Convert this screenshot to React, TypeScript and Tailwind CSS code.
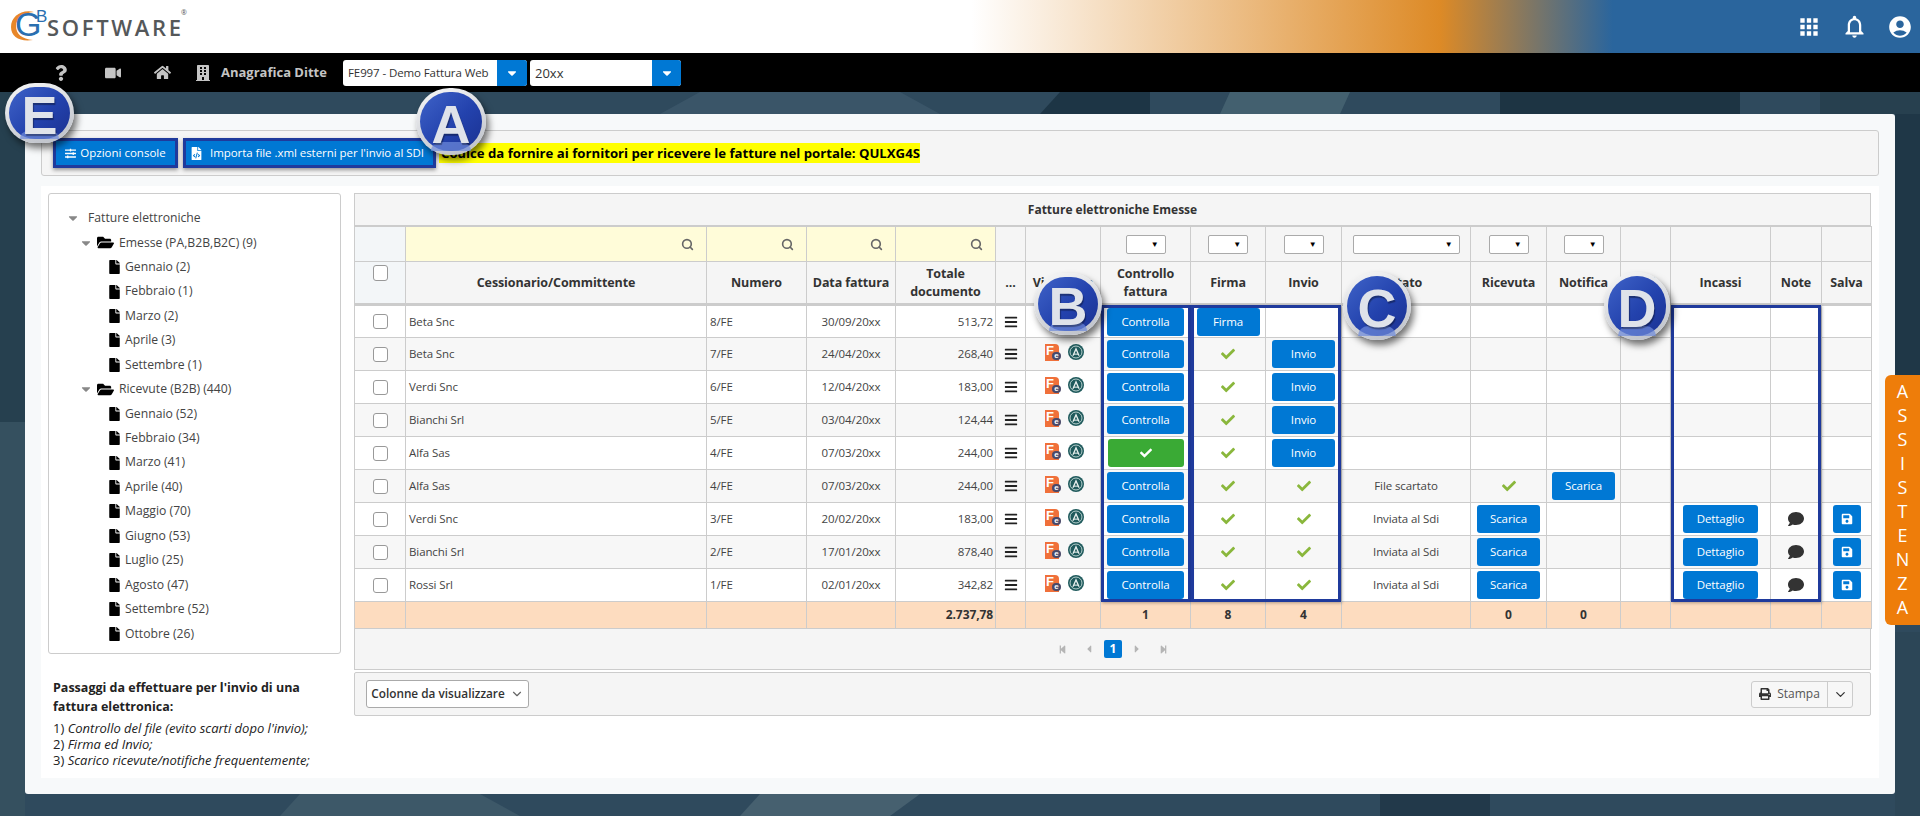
import { Search, ChevronDown } from "lucide-react";
import {
  FaBars,
  FaBuilding,
  FaCaretDown,
  FaCaretLeft,
  FaCaretRight,
  FaCheck,
  FaComment,
  FaFile,
  FaFileCode,
  FaFolderOpen,
  FaHome,
  FaPrint,
  FaQuestion,
  FaSave,
  FaSlidersH,
  FaStepBackward,
  FaStepForward,
  FaVideo,
} from "react-icons/fa";
import { MdAccountCircle, MdApps, MdNotificationsNone } from "react-icons/md";

type Row = {
  name: string;
  num: string;
  date: string;
  total: string;
  icons?: boolean;
  ok?: boolean;
  firma?: boolean;
  invio?: "btn" | "ok";
  stato?: string;
  ricevuta?: "btn" | "ok";
  notifica?: boolean;
  incassi?: boolean;
};

const rows: Row[] = [
  { name: "Beta Snc", num: "8/FE", date: "30/09/20xx", total: "513,72", firma: true },
  { name: "Beta Snc", num: "7/FE", date: "24/04/20xx", total: "268,40", icons: true, invio: "btn" },
  { name: "Verdi Snc", num: "6/FE", date: "12/04/20xx", total: "183,00", icons: true, invio: "btn" },
  { name: "Bianchi Srl", num: "5/FE", date: "03/04/20xx", total: "124,44", icons: true, invio: "btn" },
  { name: "Alfa Sas", num: "4/FE", date: "07/03/20xx", total: "244,00", icons: true, ok: true, invio: "btn" },
  { name: "Alfa Sas", num: "4/FE", date: "07/03/20xx", total: "244,00", icons: true, invio: "ok", stato: "File scartato", ricevuta: "ok", notifica: true },
  { name: "Verdi Snc", num: "3/FE", date: "20/02/20xx", total: "183,00", icons: true, invio: "ok", stato: "Inviata al Sdi", ricevuta: "btn", incassi: true },
  { name: "Bianchi Srl", num: "2/FE", date: "17/01/20xx", total: "878,40", icons: true, invio: "ok", stato: "Inviata al Sdi", ricevuta: "btn", incassi: true },
  { name: "Rossi Srl", num: "1/FE", date: "02/01/20xx", total: "342,82", icons: true, invio: "ok", stato: "Inviata al Sdi", ricevuta: "btn", incassi: true },
];

const colWidths = [51, 301, 100, 89, 100, 30, 75, 90, 75, 76, 129, 76, 74, 50, 100, 51, 50];

const emesse = ["Gennaio (2)", "Febbraio (1)", "Marzo (2)", "Aprile (3)", "Settembre (1)"];
const ricevute = [
  "Gennaio (52)",
  "Febbraio (34)",
  "Marzo (41)",
  "Aprile (40)",
  "Maggio (70)",
  "Giugno (53)",
  "Luglio (25)",
  "Agosto (47)",
  "Settembre (52)",
  "Ottobre (26)",
];

function Logo() {
  return (
    <div className="relative ml-[9px] h-[53px] w-[190px]">
      <svg className="absolute left-0 top-[8px] h-[36px] w-[34px]" viewBox="0 0 34 36">
        <path d="M25 4C12 1 2 9 2 19c0 10 9 15 22 13C13 31 7 26 7 18 7 11 14 5 25 4Z" fill="#e8872a" />
      </svg>
      <span className="absolute left-[6px] top-[5px] font-['Liberation_Sans',sans-serif] text-[34px] leading-[38px] text-[#2a6fb0]">G</span>
      <span className="absolute left-[27px] top-[8px] font-['Liberation_Sans',sans-serif] text-[17px] leading-[18px] text-[#2a6fb0]">B</span>
      <span className="absolute left-[38px] top-[12px] whitespace-nowrap font-['Open_Sans',sans-serif] text-[22px] font-semibold leading-[30px] tracking-[2.7px] text-[#55585a]">SOFTWARE</span>
      <span className="absolute left-[172px] top-[8px] text-[7px] leading-[10px] text-[#555]">®</span>
    </div>
  );
}

function Badge({ letter, className }: { letter: string; className: string }) {
  return (
    <div className={`absolute z-30 rounded-full bg-[linear-gradient(160deg,#f8f8f8,#b9bdc6)] p-[4px] shadow-[3px_5px_7px_rgba(0,0,0,0.55)] ${className}`}>
      <div className="relative flex h-full w-full items-center justify-center rounded-full bg-[linear-gradient(135deg,#3f63c8_0%,#2342ad_55%,#1b3191_100%)] pt-[4px]">
        <div className="absolute bottom-0 left-[18%] h-[16%] w-[64%] rounded-t-full bg-[#6f8cdc]/70" />
        <span className="relative font-['Liberation_Sans',sans-serif] text-[54px] font-bold leading-[48px] text-[#dfe3ea] [text-shadow:1px_2px_1px_rgba(0,0,0,0.35)]">
          {letter}
        </span>
      </div>
    </div>
  );
}

function ActionButton({
  children,
  className = "",
  color = "bg-[#0078d4]",
}: {
  children: React.ReactNode;
  className?: string;
  color?: string;
}) {
  return (
    <div className={`flex h-[28px] items-center justify-center rounded-[3px] text-[11.5px] text-white ${color} ${className}`}>
      {children}
    </div>
  );
}

function Check() {
  return <FaCheck className="mx-auto text-[14px] text-[#8ab73c]" />;
}

function FilterSelect({ className = "w-[40px]" }: { className?: string }) {
  return (
    <div className={`mx-auto flex h-[19px] items-center justify-end rounded-[2px] border border-[#aaa] bg-white pr-[6px] text-[8px] text-black ${className}`}>
      ▼
    </div>
  );
}

function RowIcons() {
  return (
    <div className="flex items-center justify-center gap-[9px] pb-[4px] pl-[3px]">
      <div className="relative h-[17px] w-[14px] rounded-tr-[4px] bg-[#f0703a]">
        <span className="absolute left-[1px] top-[-1px] font-['Liberation_Sans',sans-serif] text-[13px] font-bold leading-[16px] text-white">F</span>
        <span className="absolute bottom-[1px] right-[-2px] h-[8px] w-[9px] rounded-full bg-[#4a4a6a] text-center font-['Liberation_Sans',sans-serif] text-[8px] font-bold leading-[7px] text-white">e</span>
      </div>
      <svg width="16" height="16" viewBox="0 0 15 15">
        <circle cx="7.5" cy="7.5" r="7.5" fill="#1f5a5c" />
        <circle cx="7.5" cy="7.5" r="5.6" fill="none" stroke="#cfe0de" strokeWidth="0.8" />
        <path d="M7.5 3 11 11H9.6L7.5 6 5.4 11H4Z" fill="#e8efee" />
        <path d="M5.5 9h4v1h-4Z" fill="#e8efee" />
      </svg>
    </div>
  );
}

function TreeMonth({ label }: { label: string }) {
  return (
    <div className="flex h-[24.45px] items-center pl-[60px]">
      <FaFile className="mr-[5px] h-[14px] w-[11px] text-black" />
      <span>{label}</span>
    </div>
  );
}

function TreeFolder({ label }: { label: string }) {
  return (
    <div className="flex h-[24.45px] items-center pl-[30px]">
      <FaCaretDown className="mr-[4px] text-[14px] text-[#888]" />
      <FaFolderOpen className="mr-[5px] text-[17px] text-black" />
      <span>{label}</span>
    </div>
  );
}

const td = "border border-[#ccc] p-0 align-middle";
const th = "border border-[#ccc] p-0 text-center align-middle text-[12.5px] font-bold leading-[18px] text-[#333]";
const boxOutline = "absolute top-[112px] h-[297px] border-[3px] border-[#1f3a9c] shadow-[1px_1px_3px_rgba(0,0,0,0.3)]";

export default function App() {
  return (
    <div className="relative flex h-[816px] w-[1920px] flex-col overflow-hidden font-['Open_Sans',sans-serif] text-[#333]">
      <header className="flex h-[53px] items-center justify-between bg-[linear-gradient(90deg,#fff_50.6%,#dd8a26_75%,#2a659d_84%)]">
        <Logo />
        <div className="mr-[7px] flex items-center gap-[19px] text-white">
          <MdApps className="text-[26px]" />
          <MdNotificationsNone className="text-[27px]" />
          <MdAccountCircle className="text-[26px]" />
        </div>
      </header>

      <nav className="flex h-[39px] items-center bg-black text-[#c4c4c4]">
        <FaQuestion className="ml-[53px] text-[16px]" />
        <FaVideo className="ml-[36px] text-[16px]" />
        <FaHome className="ml-[33px] text-[17px]" />
        <FaBuilding className="ml-[24px] text-[16px]" />
        <span className="ml-[10px] w-[116px] whitespace-nowrap text-[13px] font-bold">Anagrafica Ditte</span>
        <div className="ml-[6px] flex h-[26px] w-[184px] overflow-hidden rounded-[3px] bg-white text-[11.5px] tracking-[-0.1px] text-[#333]">
          <span className="flex-1 whitespace-nowrap pl-[5px] leading-[26px]">FE997 - Demo Fattura Web</span>
          <span className="flex w-[30px] items-center justify-center bg-[#0078d4] text-[14px] text-white">
            <FaCaretDown />
          </span>
        </div>
        <div className="ml-[3px] flex h-[26px] w-[151px] overflow-hidden rounded-[3px] bg-white text-[13px] text-[#333]">
          <span className="flex-1 pl-[5px] leading-[26px]">20xx</span>
          <span className="flex w-[29px] items-center justify-center bg-[#0078d4] text-[14px] text-white">
            <FaCaretDown />
          </span>
        </div>
      </nav>

      <main className="relative h-[724px] bg-[#2f4a5d] px-[25px] pt-[22px]">
        <svg className="absolute inset-0 h-full w-full" viewBox="0 0 1920 724" preserveAspectRatio="none">
          <path d="M0 0h25v330H0Z" fill="#26404f" />
          <path d="M0 330h25v394H0Z" fill="#35505f" />
          <path d="M1060 0h90v22h-110Z" fill="#1d3545" />
          <path d="M1230 0h120l-10 22h-120Z" fill="#43606f" />
          <path d="M1500 0h240v22h-240Z" fill="#1d3443" />
          <path d="M1820 0h100v22h-100Z" fill="#27404f" />
          <path d="M700 0h200l40 22H660Z" fill="#3a5568" />
          <path d="M1895 22h25v270h-25Z" fill="#1f3747" />
          <path d="M1895 540h25v184h-25Z" fill="#2c4657" />
          <path d="M300 702h180l40 22H280Z" fill="#3d5868" />
          <path d="M760 702h160l-30 22H740Z" fill="#46606f" />
          <path d="M1380 702h110v22h-110Z" fill="#22394a" />
        </svg>

        <div className="relative flex h-[680px] flex-col rounded-[3px] bg-[#f7f9fa] px-[16px] pt-[16px]">
          <div className="flex h-[46px] items-center rounded-[3px] border border-[#ccc] bg-[#f5f5f5] pl-[11px]">
            <div className="flex h-[30px] w-[125px] items-center justify-center gap-[4px] whitespace-nowrap border-[3px] border-[#1f3a9c] bg-[#0078d4] text-[11.5px] text-white shadow-[0_2px_4px_rgba(0,0,0,0.4)]">
              <FaSlidersH className="text-[11px]" />
              Opzioni console
            </div>
            <div className="ml-[5px] flex h-[30px] w-[253px] items-center gap-[7px] whitespace-nowrap border-[3px] border-[#1f3a9c] bg-[#0078d4] pl-[4px] text-[11.5px] tracking-[-0.05px] text-white shadow-[0_2px_4px_rgba(0,0,0,0.4)]">
              <FaFileCode className="text-[13px]" />
              Importa file .xml esterni per l'invio al SDI
            </div>
            <span className="ml-[3px] whitespace-nowrap bg-[#ffff00] pl-[2px] text-[13.2px] font-bold leading-[20px] text-black">
              Codice da fornire ai fornitori per ricevere le fatture nel portale: QULXG4S
            </span>
          </div>

          <div className="mt-[10px] flex h-[592px] bg-white px-[7px] pt-[7px]">
            <aside className="w-[293px] shrink-0">
              <div className="h-[461px] rounded-[3px] border border-[#ccc] pt-[12px] text-[12.2px] text-[#444]">
                <div className="flex h-[24.45px] items-center pl-[17px]">
                  <FaCaretDown className="mr-[8px] text-[14px] text-[#888]" />
                  <span>Fatture elettroniche</span>
                </div>
                <TreeFolder label="Emesse (PA,B2B,B2C) (9)" />
                {emesse.map((m) => (
                  <TreeMonth key={m} label={m} />
                ))}
                <TreeFolder label="Ricevute (B2B) (440)" />
                {ricevute.map((m) => (
                  <TreeMonth key={m} label={m} />
                ))}
              </div>
              <div className="pl-[5px] pt-[24px] text-[#222]">
                <p className="text-[12.5px] font-bold leading-[19px]">
                  Passaggi da effettuare per l'invio di una
                  <br />
                  fattura elettronica:
                </p>
                <div className="mt-[4px] text-[13px] leading-[16px]">
                  <p>1) <i>Controllo del file (evito scarti dopo l'invio);</i></p>
                  <p>2) <i>Firma ed Invio;</i></p>
                  <p>3) <i>Scarico ricevute/notifiche frequentemente;</i></p>
                </div>
              </div>
            </aside>

            <section className="relative ml-[13px] w-[1517px]">
              <div className="flex h-[33px] items-center justify-center border border-[#ccc] bg-[#f5f5f5] text-[12px] font-bold">
                Fatture elettroniche Emesse
              </div>
              <table className="w-[1517px] table-fixed border-collapse bg-white text-[11.5px] tracking-[-0.1px] text-[#444]">
                <colgroup>
                  {colWidths.map((w, i) => (
                    <col key={i} style={{ width: w }} />
                  ))}
                </colgroup>
                <thead>
                  <tr className="h-[35px] bg-[#f5f5f5]">
                    <td className={`${td} bg-[#f3f6f8]`} />
                    {[1, 2, 3, 4].map((i) => (
                      <td key={i} className={`${td} bg-[#fffcd9] pr-[12px]`}>
                        <Search className="ml-auto h-[13px] w-[13px] text-[#666]" strokeWidth={3} />
                      </td>
                    ))}
                    <td className={td} />
                    <td className={td} />
                    <td className={td}><FilterSelect /></td>
                    <td className={td}><FilterSelect /></td>
                    <td className={td}><FilterSelect /></td>
                    <td className={td}><FilterSelect className="w-[107px]" /></td>
                    <td className={td}><FilterSelect /></td>
                    <td className={td}><FilterSelect /></td>
                    <td className={td} />
                    <td className={td} />
                    <td className={td} />
                    <td className={td} />
                  </tr>
                  <tr className="h-[43px] border-b-[3px] border-[#ccc] bg-[#f5f5f5]">
                    <th className={`${th} bg-[#f3f6f8] align-top`}>
                      <div className="mx-auto mt-[3px] h-[16px] w-[15px] rounded-[3px] border border-[#999] bg-white" />
                    </th>
                    <th className={th}>Cessionario/Committente</th>
                    <th className={th}>Numero</th>
                    <th className={th}>Data fattura</th>
                    <th className={th}>Totale<br />documento</th>
                    <th className={th}>...</th>
                    <th className={th}>Visualizza</th>
                    <th className={th}>Controllo<br />fattura</th>
                    <th className={th}>Firma</th>
                    <th className={th}>Invio</th>
                    <th className={th}>Stato</th>
                    <th className={th}>Ricevuta</th>
                    <th className={th}>Notifica</th>
                    <th className={th}>Pdf.</th>
                    <th className={th}>Incassi</th>
                    <th className={th}>Note</th>
                    <th className={th}>Salva</th>
                  </tr>
                </thead>
                <tbody>
                  {rows.map((r, i) => (
                    <tr key={r.num + i} className={`h-[33px] ${i % 2 ? "bg-[#f7f7f7]" : "bg-white"}`}>
                      <td className={td}>
                        <div className="mx-auto h-[15px] w-[15px] rounded-[3px] border border-[#999] bg-white" />
                      </td>
                      <td className={`${td} pl-[3px]`}>{r.name}</td>
                      <td className={`${td} pl-[3px]`}>{r.num}</td>
                      <td className={`${td} text-center`}>{r.date}</td>
                      <td className={`${td} pr-[2px] text-right`}>{r.total}</td>
                      <td className={td}><FaBars className="mx-auto text-[14px] text-[#222]" /></td>
                      <td className={td}>{r.icons && <RowIcons />}</td>
                      <td className={td}>
                        {r.ok ? (
                          <ActionButton className="mx-auto w-[76px]" color="bg-[#3aaa35]">
                            <FaCheck className="text-[12px]" />
                          </ActionButton>
                        ) : (
                          <ActionButton className="mx-auto w-[77px]">Controlla</ActionButton>
                        )}
                      </td>
                      <td className={td}>
                        {r.firma ? <ActionButton className="mx-auto w-[63px]">Firma</ActionButton> : <Check />}
                      </td>
                      <td className={td}>
                        {r.invio === "btn" && <ActionButton className="mx-auto w-[63px]">Invio</ActionButton>}
                        {r.invio === "ok" && <Check />}
                      </td>
                      <td className={`${td} text-center`}>{r.stato}</td>
                      <td className={td}>
                        {r.ricevuta === "btn" && <ActionButton className="mx-auto w-[63px]">Scarica</ActionButton>}
                        {r.ricevuta === "ok" && <Check />}
                      </td>
                      <td className={td}>
                        {r.notifica && <ActionButton className="mx-auto w-[63px]">Scarica</ActionButton>}
                      </td>
                      <td className={td} />
                      <td className={td}>
                        {r.incassi && <ActionButton className="mx-auto w-[75px]">Dettaglio</ActionButton>}
                      </td>
                      <td className={td}>
                        {r.incassi && <FaComment className="mx-auto text-[16px] text-[#333]" />}
                      </td>
                      <td className={td}>
                        {r.incassi && (
                          <ActionButton className="mx-auto w-[28px]">
                            <FaSave className="text-[12px]" />
                          </ActionButton>
                        )}
                      </td>
                    </tr>
                  ))}
                  <tr className="h-[27px] bg-[#fddcbf] text-[12px] font-bold text-[#333]">
                    {colWidths.map((_, i) => (
                      <td key={i} className={`${td} ${i === 4 ? "pr-[2px] text-right" : "text-center"}`}>
                        {{ 4: "2.737,78", 7: "1", 8: "8", 9: "4", 11: "0", 12: "0" }[i]}
                      </td>
                    ))}
                  </tr>
                </tbody>
              </table>

              <div className="flex h-[41px] items-center border border-t-0 border-[#ccc] bg-[#f5f5f5] pl-[703px] text-[#b5b5b5]">
                <FaStepBackward className="text-[9px]" />
                <FaCaretLeft className="ml-[16px] text-[12px]" />
                <span className="ml-[9px] flex h-[18px] w-[18px] items-center justify-center rounded-[2px] bg-[#0078d4] text-[12px] font-bold text-white">1</span>
                <FaCaretRight className="ml-[9px] text-[12px]" />
                <FaStepForward className="ml-[16px] text-[9px]" />
              </div>

              <div className="mt-[2px] flex h-[44px] items-center justify-between rounded-[2px] border border-[#ccc] bg-[#f5f5f5] pl-[11px] pr-[17px]">
                <div className="flex h-[28px] w-[163px] items-center justify-center gap-[5px] rounded-[3px] border border-[#aaa] bg-white text-[11.8px] font-semibold text-[#333]">
                  Colonne da visualizzare
                  <ChevronDown className="h-[14px] w-[14px] text-[#666]" />
                </div>
                <div className="flex h-[27px] rounded-[3px] border border-[#ccc] bg-[#f7f7f7] text-[12px] text-[#555]">
                  <div className="flex w-[76px] items-center justify-center gap-[6px] border-r border-[#ccc]">
                    <FaPrint className="text-[12px] text-[#333]" />
                    Stampa
                  </div>
                  <div className="flex w-[24px] items-center justify-center">
                    <ChevronDown className="h-[15px] w-[15px] text-[#333]" />
                  </div>
                </div>
              </div>

              <div className={`${boxOutline} left-[747px] w-[90px]`} />
              <div className={`${boxOutline} left-[837px] w-[150px]`} />
              <div className={`${boxOutline} left-[1317px] w-[150px]`} />
            </section>
          </div>
        </div>
      </main>

      <Badge letter="E" className="left-[5px] top-[83px] h-[60px] w-[69px]" />
      <Badge letter="A" className="left-[416px] top-[88px] h-[67px] w-[70px]" />
      <Badge letter="B" className="left-[1034px] top-[273px] h-[62px] w-[68px]" />
      <Badge letter="C" className="left-[1343px] top-[272px] h-[68px] w-[68px]" />
      <Badge letter="D" className="left-[1604px] top-[272px] h-[68px] w-[66px]" />

      <div className="absolute right-0 top-[375px] z-20 flex h-[250px] w-[35px] flex-col items-center rounded-l-[6px] bg-[#ee7d0a] py-[4px] text-[18px] leading-[24px] text-white">
        {"ASSISTENZA".split("").map((c, i) => (
          <span key={i}>{c}</span>
        ))}
      </div>
    </div>
  );
}
